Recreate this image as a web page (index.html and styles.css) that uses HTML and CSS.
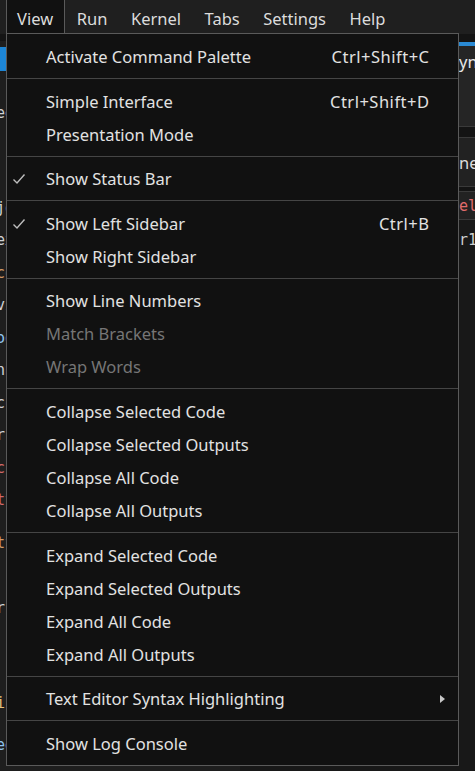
FILE: index.html
```html
<!DOCTYPE html>
<html>
<head>
<meta charset="utf-8">
<link rel="stylesheet" href="styles.css">
</head>
<body>
<div class="app">
  <div class="menubar">
    <div class="mb-item active">View</div>
    <div class="mb-item">Run</div>
    <div class="mb-item">Kernel</div>
    <div class="mb-item">Tabs</div>
    <div class="mb-item">Settings</div>
    <div class="mb-item">Help</div>
  </div>
  <div class="main">
    <div class="sidebar">
      <div class="sb-top"></div>
      <div class="sb-sel"></div>
      <div class="sb-line lt first">ee</div>
      <div class="sb-line lt g2">jo</div>
      <div class="sb-line lt">ex</div>
      <div class="sb-line or">co</div>
      <div class="sb-line lt">vi</div>
      <div class="sb-line bl">oo</div>
      <div class="sb-line lt">nn</div>
      <div class="sb-line lt">cc</div>
      <div class="sb-line lt">rr</div>
      <div class="sb-line rd">cc</div>
      <div class="sb-line rd">tt</div>
      <div class="sb-line or g1">tt</div>
      <div class="sb-line lt g3">rr</div>
      <div class="sb-line ye g2">ii</div>
      <div class="sb-line bl g1">ee</div>
    </div>
    <div class="editor">
      <div class="ed-top"></div>
      <div class="tab-area"><span class="tab-title">ynb</span></div>
      <div class="band"></div>
      <div class="row"><span>ne</span></div>
      <div class="band thin"></div>
      <div class="row code red"><span>el</span></div>
      <div class="plain"><span>r1</span></div>
    </div>
  </div>

  <div class="menu">
    <div class="mi"><span class="lbl">Activate Command Palette</span><span class="sc">Ctrl+Shift+C</span></div>
    <div class="sep"></div>
    <div class="mi"><span class="lbl">Simple Interface</span><span class="sc">Ctrl+Shift+D</span></div>
    <div class="mi"><span class="lbl">Presentation Mode</span></div>
    <div class="sep"></div>
    <div class="mi"><span class="chk"><svg width="14" height="12" viewBox="0 0 14 12"><path d="M1.5 6.5 L5 10 L12.5 1.5" fill="none" stroke="#bdbdbd" stroke-width="1.4"/></svg></span><span class="lbl">Show Status Bar</span></div>
    <div class="sep"></div>
    <div class="mi"><span class="chk"><svg width="14" height="12" viewBox="0 0 14 12"><path d="M1.5 6.5 L5 10 L12.5 1.5" fill="none" stroke="#bdbdbd" stroke-width="1.4"/></svg></span><span class="lbl">Show Left Sidebar</span><span class="sc">Ctrl+B</span></div>
    <div class="mi"><span class="lbl">Show Right Sidebar</span></div>
    <div class="sep"></div>
    <div class="mi"><span class="lbl">Show Line Numbers</span></div>
    <div class="mi dis"><span class="lbl">Match Brackets</span></div>
    <div class="mi dis"><span class="lbl">Wrap Words</span></div>
    <div class="sep"></div>
    <div class="mi"><span class="lbl">Collapse Selected Code</span></div>
    <div class="mi"><span class="lbl">Collapse Selected Outputs</span></div>
    <div class="mi"><span class="lbl">Collapse All Code</span></div>
    <div class="mi"><span class="lbl">Collapse All Outputs</span></div>
    <div class="sep"></div>
    <div class="mi"><span class="lbl">Expand Selected Code</span></div>
    <div class="mi"><span class="lbl">Expand Selected Outputs</span></div>
    <div class="mi"><span class="lbl">Expand All Code</span></div>
    <div class="mi"><span class="lbl">Expand All Outputs</span></div>
    <div class="sep"></div>
    <div class="mi"><span class="lbl">Text Editor Syntax Highlighting</span><span class="arrow"></span></div>
    <div class="sep"></div>
    <div class="mi"><span class="lbl">Show Log Console</span></div>
  </div>
</div>
</body>
</html>
```

FILE: styles.css
```css
* { box-sizing: border-box; }
html, body { margin: 0; padding: 0; }
body {
  width: 475px;
  height: 771px;
  overflow: hidden;
  background: #181818;
  font-family: "Noto Sans", "Open Sans", sans-serif;
  color: #dcdcdc;
}
.app { position: relative; width: 475px; height: 771px; }

.menubar {
  height: 34px;
  background: #1f1f1f;
  display: flex;
  padding-left: 6px;
  font-size: 16.5px;
}
.mb-item {
  padding: 3px 10.75px 0;
  line-height: 31px;
  color: #dcdcdc;
  border-left: 1px solid transparent;
  border-right: 1px solid transparent;
}
.mb-item.active {
  background: #111111;
  border-color: #5a5a5a;
  padding: 3px 10px 0;
  height: 34px;
  width: 59px;
}

.main { display: flex; height: 737px; }
.sidebar {
  width: 240px;
  background: #1e1e1e;
  overflow: hidden;
}
.sb-top { height: 7px; background: #141414; }
.sb-sel { height: 24px; margin-top: 6px; background: #1d86d6; }
.sb-line {
  height: 32.5px;
  line-height: 32.5px;
  font-family: "DejaVu Sans Mono", monospace;
  font-size: 15px;
  text-indent: -4px;
  white-space: nowrap;
  overflow: hidden;
  color: #c8c8c8;
}
.sb-line.first { margin-top: 25.75px; }
.sb-line.g1 { margin-top: 10px; }
.sb-line.g2 { margin-top: 62.5px; }
.sb-line.g3 { margin-top: 32.5px; }
.sb-line.lt { color: #cfd2d6; }
.sb-line.or { color: #d19a66; }
.sb-line.bl { color: #8fc4f0; }
.sb-line.rd { color: #d16969; }
.sb-line.ye { color: #e5c07b; }

.editor { flex: 1; display: flex; flex-direction: column; background: #181818; overflow: hidden; }
.ed-top { height: 8px; background: #141414; flex: none; }
.tab-area {
  height: 85px;
  flex: none;
  background: #252525;
  border-top: 4px solid #2a8ad4;
  border-bottom: 1px solid #3a3a3a;
  padding: 4px 0 0 219px;
  font-size: 16.5px;
  color: #e6e6e6;
  white-space: nowrap;
}
.band { height: 11px; flex: none; background: #141414; border-bottom: 1px solid #3a3a3a; }
.band.thin { height: 5px; }
.row {
  height: 49px;
  flex: none;
  background: #222222;
  border-bottom: 1px solid #3a3a3a;
  display: flex;
  align-items: center;
  padding-left: 219px;
  font-size: 16.5px;
  color: #dcdcdc;
  white-space: nowrap;
}
.row.code {
  height: 28px;
  font-family: "DejaVu Sans Mono", monospace;
  font-size: 15px;
}
.row.red { color: #e06c6c; }
.plain {
  flex: none;
  height: 40px;
  display: flex;
  align-items: center;
  padding-left: 219px;
  font-family: "DejaVu Sans Mono", monospace;
  font-size: 15px;
  color: #cfcfcf;
}

.menu {
  position: absolute;
  left: 6px;
  top: 33px;
  width: 453px;
  height: 733px;
  background: #111111;
  border: 1px solid #5a5a5a;
  padding: 6px 0 5px 0;
  font-size: 16.5px;
}
.mi {
  position: relative;
  height: 33px;
  display: flex;
  align-items: center;
  padding: 0 29px 0 39px;
  color: #e2e2e2;
  white-space: nowrap;
}
.mi .lbl { flex: 1; }
.mi .sc { color: #e2e2e2; letter-spacing: 0.5px; margin-right: -0.5px; }
.mi.dis { color: #767676; }
.chk {
  position: absolute;
  left: 5px;
  top: 11px;
  width: 14px;
  height: 12px;
  display: flex;
}
.sep { height: 1px; background: #454545; margin: 5px 0 5.6px 0; }
.arrow {
  width: 0;
  height: 0;
  border-top: 4px solid transparent;
  border-bottom: 4px solid transparent;
  border-left: 5px solid #c8c8c8;
  margin-right: -16px;
}
```
